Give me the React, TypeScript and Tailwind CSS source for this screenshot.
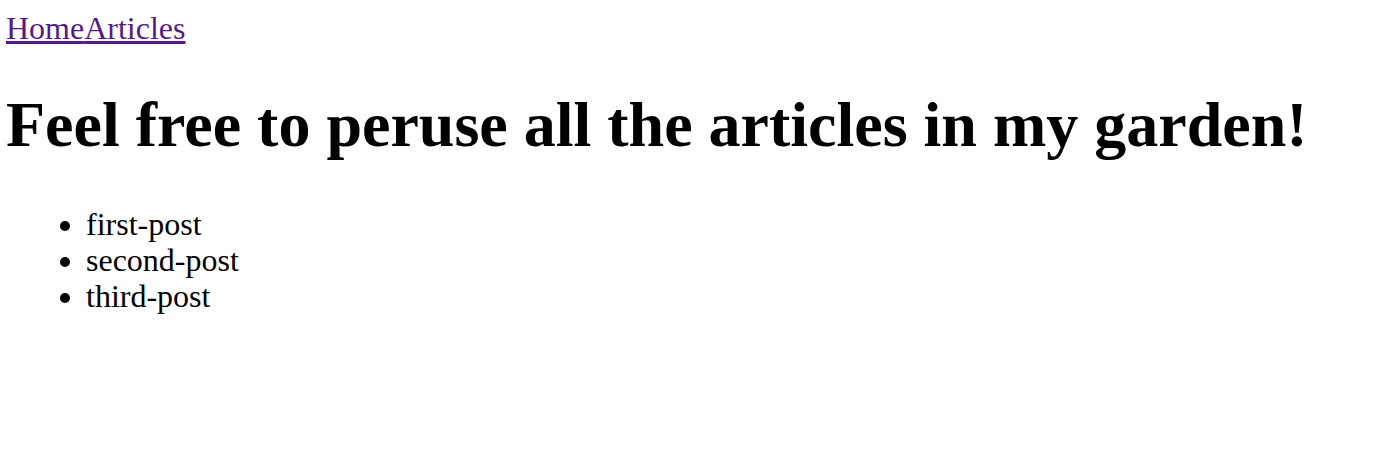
import React from 'react';

const posts = ['first-post', 'second-post', 'third-post'];

export default function App() {
    return (
        <div className="pt-[10px] px-[6px] font-['Liberation_Serif','Times_New_Roman',serif] text-[32px] leading-[36px] text-black bg-white min-h-[462px]">
            <nav>
                <a href="#" className="text-[#551a8b] underline">Home</a>
                <a href="#" className="text-[#551a8b] underline">Articles</a>
            </nav>
            <h1 className="mt-[43px] mb-[45px] text-[64px] leading-[72px] font-bold">
                Feel free to peruse all the articles in my garden!
            </h1>
            <ul className="list-disc pl-[80px]">
                {posts.map((p) => (
                    <li key={p}>{p}</li>
                ))}
            </ul>
        </div>
    );
}
